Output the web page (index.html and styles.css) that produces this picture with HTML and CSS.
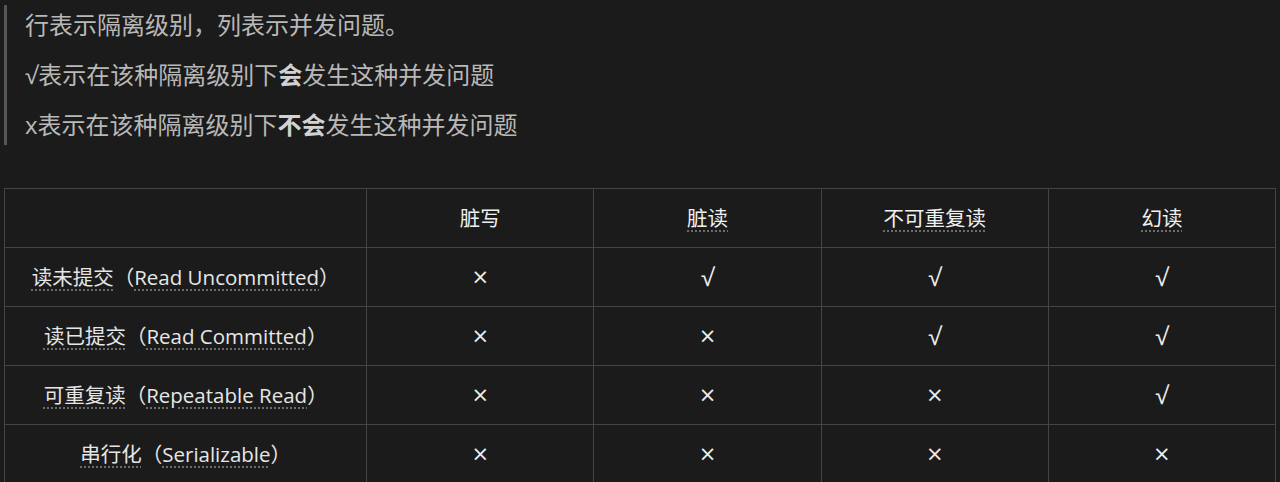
FILE: index.html
```html
<!DOCTYPE html>
<html lang="zh-CN">
<head>
<meta charset="utf-8">
<title>隔离级别</title>
<link rel="stylesheet" href="styles.css">
</head>
<body>
<blockquote class="note">
  <p>行表示隔离级别，列表示并发问题。</p>
  <p><span class="root">√</span>表示在该种隔离级别下<strong>会</strong>发生这种并发问题</p>
  <p>x表示在该种隔离级别下<strong>不会</strong>发生这种并发问题</p>
</blockquote>
<table class="grid">
  <colgroup>
    <col class="c-first"><col class="c-std"><col class="c-std"><col class="c-std"><col class="c-std">
  </colgroup>
  <thead>
    <tr>
      <th></th>
      <th>脏写</th>
      <th><span class="dot">脏读</span></th>
      <th><span class="dot">不可重复读</span></th>
      <th><span class="dot">幻读</span></th>
    </tr>
  </thead>
  <tbody>
    <tr>
      <td><span class="dot">读未提交</span>（<span class="dot">Read Uncommitted</span>）</td>
      <td class="no">×</td><td class="yes">√</td><td class="yes">√</td><td class="yes">√</td>
    </tr>
    <tr>
      <td><span class="dot">读已提交</span>（<span class="dot">Read Committed</span>）</td>
      <td class="no">×</td><td class="no">×</td><td class="yes">√</td><td class="yes">√</td>
    </tr>
    <tr>
      <td><span class="dot">可重复读</span>（<span class="dot">Repeatable Read</span>）</td>
      <td class="no">×</td><td class="no">×</td><td class="no">×</td><td class="yes">√</td>
    </tr>
    <tr>
      <td><span class="dot">串行化</span>（<span class="dot">Serializable</span>）</td>
      <td class="no">×</td><td class="no">×</td><td class="no">×</td><td class="no">×</td>
    </tr>
  </tbody>
</table>
</body>
</html>
```

FILE: styles.css
```css
html, body {
  margin: 0;
  background: #1b1b1b;
}
body {
  padding: 5px 4px 0 4px;
  font-family: "Open Sans", "Noto Sans CJK SC", sans-serif;
  color: #e4e4e4;
}
.note {
  margin: 0;
  border-left: 3px solid #555555;
  padding-left: 18px;
  display: flex;
  flex-direction: column;
  gap: 10px;
}
.note p {
  margin: 0;
  height: 40px;
  font-size: 24px;
  line-height: 40px;
  color: #b8b8b8;
}
.note .root {
  font-family: "Open Sans", sans-serif;
}
.note strong {
  color: #d2d2d2;
  font-weight: 700;
}
.grid {
  margin-top: 43px;
  border-collapse: collapse;
  width: 1272px;
  table-layout: fixed;
  font-family: "Open Sans", "Noto Sans CJK SC", sans-serif;
  font-size: 20.5px;
}
.c-first { width: 362px; }
.c-std { width: 227px; }
.grid th, .grid td {
  border: 1px solid #444444;
  height: 58px;
  padding: 0;
  text-align: center;
  vertical-align: middle;
  font-weight: 400;
  line-height: 28px;
  color: #e6e6e6;
}
.grid th {
  color: #f0f0f0;
}
.grid td.no {
  font-family: "DejaVu Sans", sans-serif;
  font-size: 21px;
  color: #ececec;
}
.grid td.yes {
  font-family: "Open Sans", sans-serif;
  font-size: 24px;
  color: #ececec;
}
.dot {
  text-decoration: underline dotted #6c6c6c;
  text-underline-offset: 4px;
}
```
